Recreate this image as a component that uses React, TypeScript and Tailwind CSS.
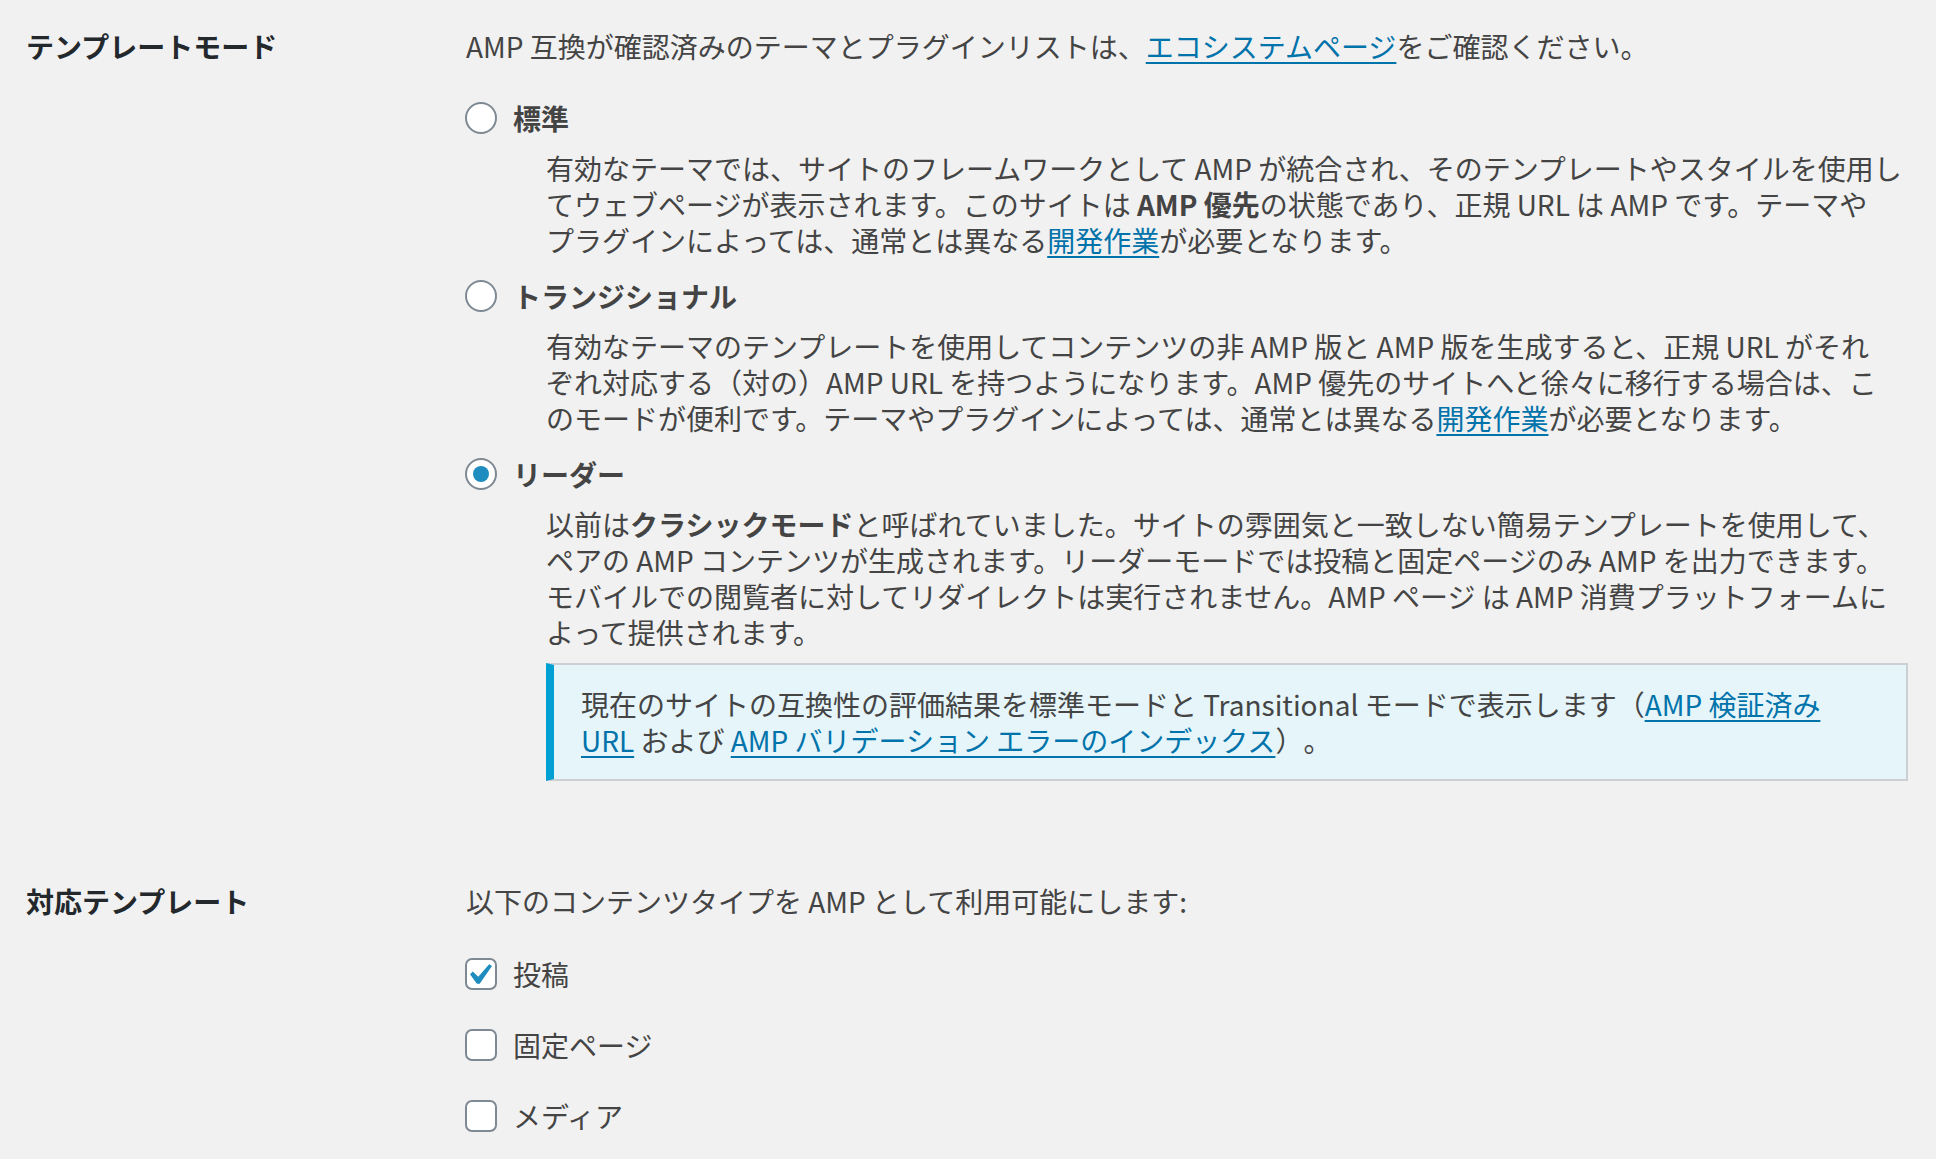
import React from "react";

// Older WP admin palette (5.3/5.4): #f1f1f1 page, #444 text, #0073aa links
const A = ({ children }: { children: React.ReactNode }) => (
  <a href="#" className="text-[#0073aa] underline decoration-[2px] underline-offset-[4px]">
    {children}
  </a>
);

function Radio({ checked, label }: { checked?: boolean; label: string }) {
  return (
    <label className="flex h-[36px] items-center gap-[16px]">
      <span className="-ml-px flex h-[32px] w-[32px] shrink-0 items-center justify-center rounded-full border-2 border-[#7e8993] bg-white">
        {checked && <span className="h-[16px] w-[16px] rounded-full bg-[#1e8cbe]" />}
      </span>
      <span className="font-bold text-[#444]">{label}</span>
    </label>
  );
}

function Checkbox({ checked, label }: { checked?: boolean; label: string }) {
  return (
    <label className="flex h-[36px] items-center gap-[16px]">
      <span className="-ml-px flex h-[32px] w-[32px] shrink-0 items-center justify-center rounded-[7px] border-2 border-[#7e8993] bg-white">
        {checked && (
          <svg width="22" height="20" viewBox="5.78 4.89 10.39 9.32" fill="#1e8cbe">
            <path d="M14.83 4.89l1.34.94-5.81 8.38H9.02L5.78 9.67l1.34-1.25 2.57 2.4z" />
          </svg>
        )}
      </span>
      <span>{label}</span>
    </label>
  );
}

function Desc({ children }: { children: React.ReactNode }) {
  return <p className="mt-[14px] pl-[80px] whitespace-nowrap">{children}</p>;
}

export default function App() {
  return (
    <div className="min-h-screen bg-[#f1f1f1] pt-[28px] font-['Noto_Sans_CJK_JP','Noto_Sans',sans-serif] text-[28px] leading-[36px] text-[#444] [text-spacing-trim:space-all]">
      {/* Template mode */}
      <div className="flex">
        <div className="w-[466px] shrink-0 pl-[26px] font-bold text-[#23282d]">テンプレートモード</div>
        <div className="flex-1 pr-[28px]">
          <p>
            AMP 互換が確認済みのテーマとプラグインリストは、<A>エコシステムページ</A>をご確認ください。
          </p>

          <div className="mt-[36px]">
            <Radio label="標準" />
            <Desc>
              有効なテーマでは、サイトのフレームワークとして AMP が統合され、そのテンプレートやスタイルを使用し
              <br />
              てウェブページが表示されます。このサイトは <b>AMP 優先</b>の状態であり、正規 URL は AMP です。テーマや
              <br />
              プラグインによっては、通常とは異なる<A>開発作業</A>が必要となります。
            </Desc>
          </div>

          <div className="mt-[20px]">
            <Radio label="トランジショナル" />
            <Desc>
              有効なテーマのテンプレートを使用してコンテンツの非 AMP 版と AMP 版を生成すると、正規 URL がそれ
              <br />
              ぞれ対応する（対の）AMP URL を持つようになります。AMP 優先のサイトへと徐々に移行する場合は、こ
              <br />
              のモードが便利です。テーマやプラグインによっては、通常とは異なる<A>開発作業</A>が必要となります。
            </Desc>
          </div>

          <div className="mt-[20px]">
            <Radio checked label="リーダー" />
            <Desc>
              以前は<b>クラシックモード</b>と呼ばれていました。サイトの雰囲気と一致しない簡易テンプレートを使用して、
              <br />
              ペアの AMP コンテンツが生成されます。リーダーモードでは投稿と固定ページのみ AMP を出力できます。
              <br />
              モバイルでの閲覧者に対してリダイレクトは実行されません。AMP ページ は AMP 消費プラットフォームに
              <br />
              よって提供されます。
            </Desc>
            <div className="mt-[13px] ml-[80px] border-2 border-l-[8px] border-[#ccd0d4] border-l-[#00a0d2] bg-[#e5f5fa] py-[21px] pl-[27px] pr-[20px]">
              <p className="whitespace-nowrap">
                現在のサイトの互換性の評価結果を標準モードと Transitional モードで表示します（<A>AMP 検証済み<br />URL</A> および <A>AMP バリデーション エラーのインデックス</A>）。
              </p>
            </div>
          </div>
        </div>
      </div>

      {/* Supported templates */}
      <div className="mt-[102px] flex">
        <div className="w-[466px] shrink-0 pl-[26px] font-bold text-[#23282d]">対応テンプレート</div>
        <div className="flex-1 pr-[28px]">
          <p>以下のコンテンツタイプを AMP として利用可能にします:</p>
          <div className="mt-[37px] flex flex-col gap-[35px]">
            <Checkbox checked label="投稿" />
            <Checkbox label="固定ページ" />
            <Checkbox label="メディア" />
          </div>
        </div>
      </div>
    </div>
  );
}
